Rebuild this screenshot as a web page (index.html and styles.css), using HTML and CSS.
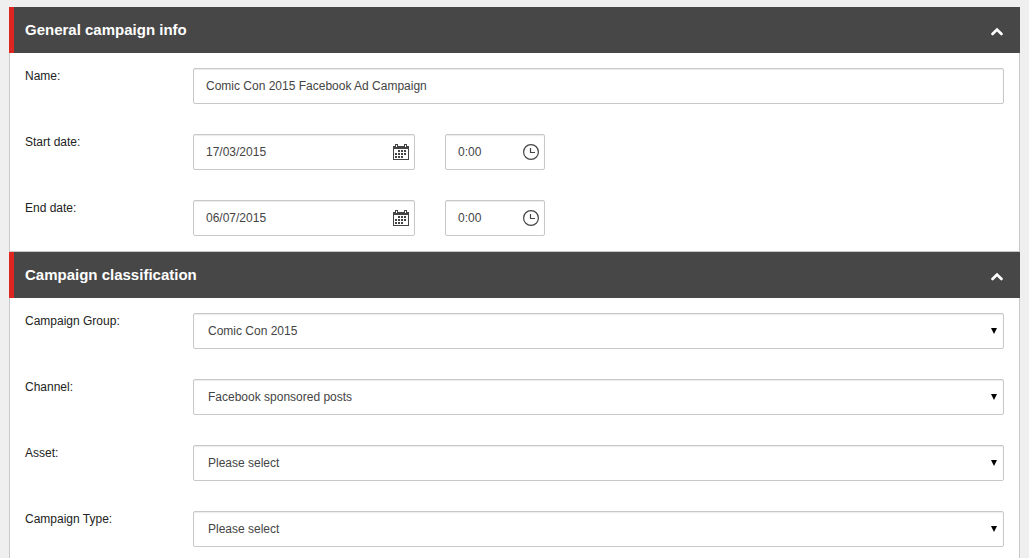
FILE: index.html
```
<!DOCTYPE html>
<html lang="en">

<head>
    <meta charset="UTF-8">
    <meta name="viewport" content="width=device-width, initial-scale=1.0">
    <title>Campaign</title>
    <link rel="stylesheet" href="styles.css">
</head>

<body>
    <!-- Shared icons -->
    <svg class="sprite" aria-hidden="true">
        <symbol id="icon-chevron" viewBox="0 0 14 9">
            <path d="M2.5 6.9 7 2.6l4.5 4.3" fill="none" stroke="currentColor" stroke-width="2.8" stroke-linecap="round"/>
        </symbol>
        <symbol id="icon-calendar" viewBox="0 0 16 16">
            <path fill="currentColor" fill-rule="evenodd" d="M0 2h2V0h3v2h6V0h3v2h2v14H0zM1 5v10h14V5zM3 1v2h1V1zM12 1v2h1V1z"/>
            <path fill="currentColor" d="M5 6h2v2H5zM8 6h2v2H8zM11 6h2v2h-2zM2 9h2v2H2zM5 9h2v2H5zM8 9h2v2H8zM11 9h2v2h-2zM2 12h2v2H2zM5 12h2v2H5zM8 12h2v2H8z"/>
        </symbol>
        <symbol id="icon-clock" viewBox="0 0 16 16">
            <circle cx="8" cy="8" r="7.4" fill="none" stroke="currentColor" stroke-width="1.2"/>
            <path d="M7.5 4v4.5H12" fill="none" stroke="currentColor" stroke-width="1.2"/>
        </symbol>
        <symbol id="icon-arrow" viewBox="0 0 6 6">
            <path d="M0 0h6L3 6z" fill="currentColor"/>
        </symbol>
    </svg>

    <form class="campaign-form">
        <section class="panel">
            <div class="panel-header">
                <h2>General campaign info</h2>
                <button type="button" class="toggle-btn" aria-label="Collapse general campaign info">
                    <svg><use href="#icon-chevron"/></svg>
                </button>
            </div>
            <div class="panel-body">
                <div class="form-row">
                    <label for="name">Name:</label>
                    <input type="text" id="name" value="Comic Con 2015 Facebook Ad Campaign">
                </div>

                <div class="form-row">
                    <label for="startDate">Start date:</label>
                    <div class="date-time">
                        <div class="field date">
                            <input type="text" id="startDate" value="17/03/2015">
                            <svg class="field-icon"><use href="#icon-calendar"/></svg>
                        </div>
                        <div class="field time">
                            <input type="text" id="startTime" aria-label="Start time" value="0:00">
                            <svg class="field-icon"><use href="#icon-clock"/></svg>
                        </div>
                    </div>
                </div>

                <div class="form-row">
                    <label for="endDate">End date:</label>
                    <div class="date-time">
                        <div class="field date">
                            <input type="text" id="endDate" value="06/07/2015">
                            <svg class="field-icon"><use href="#icon-calendar"/></svg>
                        </div>
                        <div class="field time">
                            <input type="text" id="endTime" aria-label="End time" value="0:00">
                            <svg class="field-icon"><use href="#icon-clock"/></svg>
                        </div>
                    </div>
                </div>
            </div>
        </section>

        <section class="panel">
            <div class="panel-header">
                <h2>Campaign classification</h2>
                <button type="button" class="toggle-btn" aria-label="Collapse campaign classification">
                    <svg><use href="#icon-chevron"/></svg>
                </button>
            </div>
            <div class="panel-body">
                <div class="form-row">
                    <label for="group">Campaign Group:</label>
                    <div class="field">
                        <select id="group">
                            <option>Comic Con 2015</option>
                        </select>
                        <svg class="select-arrow"><use href="#icon-arrow"/></svg>
                    </div>
                </div>

                <div class="form-row">
                    <label for="channel">Channel:</label>
                    <div class="field">
                        <select id="channel">
                            <option>Facebook sponsored posts</option>
                        </select>
                        <svg class="select-arrow"><use href="#icon-arrow"/></svg>
                    </div>
                </div>

                <div class="form-row">
                    <label for="asset">Asset:</label>
                    <div class="field">
                        <select id="asset">
                            <option>Please select</option>
                        </select>
                        <svg class="select-arrow"><use href="#icon-arrow"/></svg>
                    </div>
                </div>

                <div class="form-row">
                    <label for="type">Campaign Type:</label>
                    <div class="field">
                        <select id="type">
                            <option>Please select</option>
                        </select>
                        <svg class="select-arrow"><use href="#icon-arrow"/></svg>
                    </div>
                </div>
            </div>
        </section>
    </form>
</body>

</html>
```

FILE: styles.css
```
* {
    box-sizing: border-box;
    margin: 0;
    padding: 0;
}

body {
    font-family: "Liberation Sans", Arial, sans-serif;
    font-size: 12px;
    line-height: 16px;
    color: #222;
    background-color: #efefef;
    padding: 7px 9px 0;
}

.sprite {
    display: none;
}

.panel-header {
    display: flex;
    align-items: center;
    justify-content: space-between;
    height: 46px;
    padding: 0 16px 0 11px;
    border-left: 5px solid #dc261f;
    background-color: #474747;
    color: #fff;
}

.panel-header h2 {
    font-size: 15px;
    line-height: 20px;
    font-weight: bold;
}

.toggle-btn {
    display: flex;
    padding-top: 2px;
    border: none;
    background: none;
    color: inherit;
    cursor: pointer;
}

.toggle-btn svg {
    width: 14px;
    height: 9px;
}

.panel-body {
    display: grid;
    gap: 30px;
    padding: 15px;
    border: 1px solid #c8c8c8;
    border-top: none;
    background-color: #fff;
}

.form-row {
    display: grid;
    grid-template-columns: 168px 1fr;
    align-items: start;
}

.date-time {
    display: flex;
    gap: 30px;
}

.field {
    position: relative;
}

.date {
    width: 222px;
}

.time {
    width: 100px;
}

input[type="text"],
select {
    display: block;
    width: 100%;
    height: 36px;
    padding: 0 12px;
    border: 1px solid #c8c8c8;
    border-radius: 2px;
    background-color: #fff;
    box-shadow: inset 0 1px 1px rgba(0, 0, 0, 0.08);
    color: #444;
    font-family: inherit;
    font-size: 12px;
}

select {
    appearance: none;
    padding: 0 14px;
}

input[type="text"]:focus,
select:focus {
    outline: none;
    border-color: #888;
}

/* Icons sit on top of the inputs */
.field-icon {
    position: absolute;
    top: 10px;
    right: 6px;
    width: 16px;
    height: 16px;
    color: #444;
    pointer-events: none;
}

.select-arrow {
    position: absolute;
    top: 15px;
    right: 7px;
    width: 6px;
    height: 6px;
    color: #000;
    pointer-events: none;
}
```
